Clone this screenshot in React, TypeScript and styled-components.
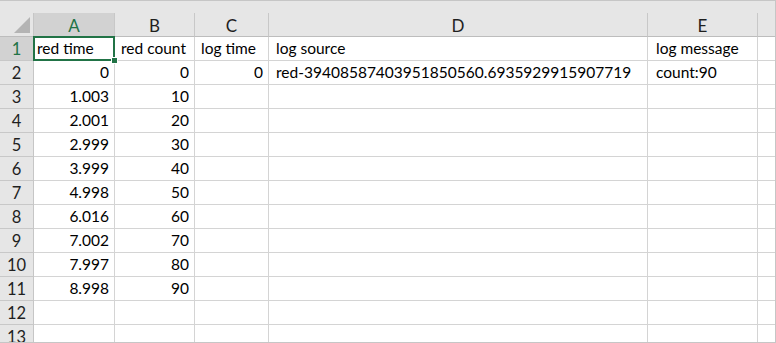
import React from 'react';
import styled, { createGlobalStyle } from 'styled-components';

const GlobalStyle = createGlobalStyle`
  html, body {
    margin: 0;
    padding: 0;
    background: #ffffff;
  }
`;

// column letter, width in px, left padding of its text
const COLS = [
  { key: 'A', width: 81, pad: 3 },
  { key: 'B', width: 80, pad: 6 },
  { key: 'C', width: 74, pad: 6 },
  { key: 'D', width: 379, pad: 7 },
  { key: 'E', width: 110, pad: 8 },
  { key: '', width: 18, pad: 4 },
];

type Cell = { text: string; align?: 'left' | 'right' };

const ROWS: Cell[][] = [
  [{ text: 'red time' }, { text: 'red count' }, { text: 'log time' }, { text: 'log source' }, { text: 'log message' }],
  [
    { text: '0', align: 'right' },
    { text: '0', align: 'right' },
    { text: '0', align: 'right' },
    { text: 'red-39408587403951850560.6935929915907719' },
    { text: 'count:90' },
  ],
  [{ text: '1.003', align: 'right' }, { text: '10', align: 'right' }],
  [{ text: '2.001', align: 'right' }, { text: '20', align: 'right' }],
  [{ text: '2.999', align: 'right' }, { text: '30', align: 'right' }],
  [{ text: '3.999', align: 'right' }, { text: '40', align: 'right' }],
  [{ text: '4.998', align: 'right' }, { text: '50', align: 'right' }],
  [{ text: '6.016', align: 'right' }, { text: '60', align: 'right' }],
  [{ text: '7.002', align: 'right' }, { text: '70', align: 'right' }],
  [{ text: '7.997', align: 'right' }, { text: '80', align: 'right' }],
  [{ text: '8.998', align: 'right' }, { text: '90', align: 'right' }],
  [],
  [],
];

const Frame = styled.div`
  width: 776px;
  height: 343px;
  box-sizing: border-box;
  overflow: hidden;
  background: #e6e6e6;
  border-top: 1px solid #c6c6c6;
  border-right: 1px solid #c6c6c6;
  border-bottom: 1px solid #c6c6c6;
  font-family: Lato, "Liberation Sans", sans-serif;
  color: #000;
`;

const TopStrip = styled.div`
  height: 12px;
`;

const Sheet = styled.div`
  display: grid;
  grid-template-columns: 34px ${COLS.map((c) => `${c.width}px`).join(' ')};
  grid-auto-rows: 24px;
  background: #ffffff;
`;

const Corner = styled.div`
  position: relative;
  background: #e6e6e6;
  border-right: 1px solid #c6c6c6;
  border-bottom: 1px solid #bdbdbd;
  box-sizing: border-box;

  &::after {
    content: '';
    position: absolute;
    right: 3px;
    bottom: 3px;
    width: 16px;
    height: 16px;
    background: #b4b4b4;
    clip-path: polygon(100% 0, 100% 100%, 0 100%);
  }
`;

const ColHeader = styled.div<{ $selected?: boolean }>`
  display: flex;
  align-items: center;
  justify-content: center;
  box-sizing: border-box;
  padding-top: 1px;
  background: ${({ $selected }) => ($selected ? '#d2d2d2' : '#e6e6e6')};
  border-right: 1px solid #c8c8c8;
  border-bottom: 1px solid #bdbdbd;
  font-size: 17px;
  color: ${({ $selected }) => ($selected ? '#217346' : '#1f1f1f')};
`;

const RowHeader = styled.div<{ $selected?: boolean }>`
  display: flex;
  align-items: center;
  justify-content: center;
  box-sizing: border-box;
  padding-top: 1px;
  background: ${({ $selected }) => ($selected ? '#d2d2d2' : '#e6e6e6')};
  border-right: 1px solid #c6c6c6;
  border-bottom: 1px solid #c8c8c8;
  font-size: 16.5px;
  color: ${({ $selected }) => ($selected ? '#217346' : '#1f1f1f')};
`;

const DataCell = styled.div<{ $align: 'left' | 'right'; $pad: number; $selected?: boolean }>`
  position: relative;
  display: flex;
  align-items: flex-end;
  justify-content: ${({ $align }) => ($align === 'right' ? 'flex-end' : 'flex-start')};
  box-sizing: border-box;
  padding: 0 5px 2px ${({ $pad }) => $pad}px;
  border-right: 1px solid #d4d4d4;
  border-bottom: 1px solid #d4d4d4;
  font-size: 15.5px;
  line-height: 20px;
  white-space: nowrap;
  background: #ffffff;
  z-index: ${({ $selected }) => ($selected ? 2 : 'auto')};

  ${({ $selected }) =>
    $selected &&
    `
    &::before {
      content: '';
      position: absolute;
      left: -1px;
      top: -1px;
      right: -1px;
      bottom: -1px;
      border: 2px solid #217346;
      pointer-events: none;
    }
    &::after {
      content: '';
      position: absolute;
      right: -4px;
      bottom: -4px;
      width: 5px;
      height: 5px;
      background: #217346;
      border: 1px solid #ffffff;
    }
  `}
`;

export default function App() {
  return (
    <>
      <GlobalStyle />
      <Frame>
        <TopStrip />
        <Sheet>
          <Corner />
          {COLS.map((c, i) => (
            <ColHeader key={`h${i}`} $selected={c.key === 'A'}>
              {c.key}
            </ColHeader>
          ))}
          {ROWS.map((row, r) => (
            <React.Fragment key={r}>
              <RowHeader $selected={r === 0}>{r + 1}</RowHeader>
              {COLS.map((c, ci) => {
                const cell = row[ci];
                return (
                  <DataCell
                    key={ci}
                    $align={cell?.align ?? 'left'}
                    $pad={c.pad}
                    $selected={r === 0 && ci === 0}
                  >
                    {cell?.text ?? ''}
                  </DataCell>
                );
              })}
            </React.Fragment>
          ))}
        </Sheet>
      </Frame>
    </>
  );
}
